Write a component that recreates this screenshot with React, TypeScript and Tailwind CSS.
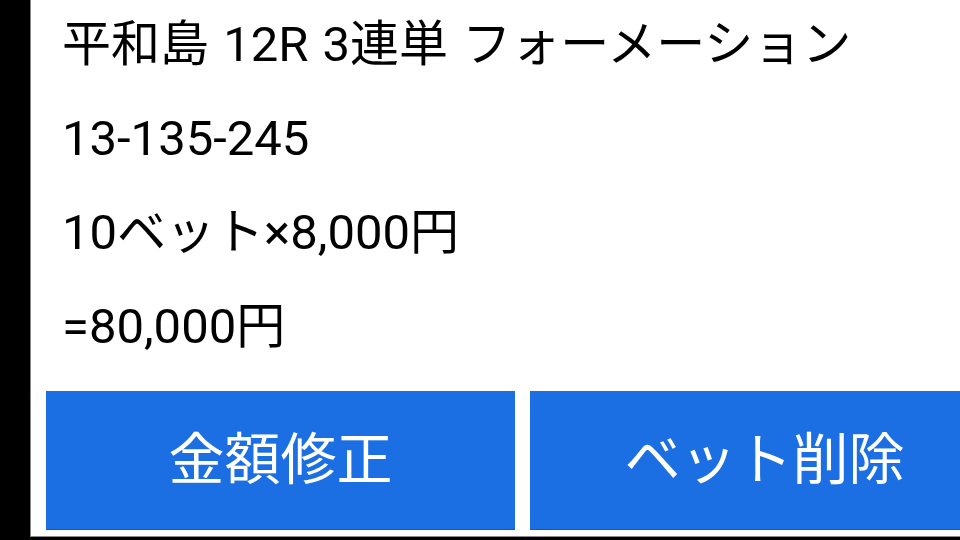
import React from "react";

export default function App() {
  const font = { fontFamily: 'Roboto, "Noto Sans CJK JP", sans-serif' };
  return (
    <div
      className="w-[960px] h-[540px] bg-black overflow-hidden flex"
      style={font}
    >
      <div className="ml-[30px] w-[985px] h-[537px] shrink-0 bg-white border-l border-b border-[#8a8a8a] flex flex-col">
        <div className="-mt-[2px] pl-[31px] text-[49px] text-black">
          <div className="h-[94px] leading-[94px] whitespace-nowrap [word-spacing:2px]">平和島 12R 3連単 フォーメーション</div>
          <div className="h-[94px] leading-[94px] whitespace-nowrap">13-135-245</div>
          <div className="h-[94px] leading-[94px] whitespace-nowrap">10ベット×8,000円</div>
          <div className="h-[94px] leading-[94px] whitespace-nowrap">=80,000円</div>
        </div>
        <div className="mt-[17px] px-[15px] flex gap-[15px]">
          <button className="w-[469px] h-[139px] shrink-0 bg-[#1b6fe2] border-b border-[#1659bd] text-white text-[56px] leading-none flex items-center justify-center">
            金額修正
          </button>
          <button className="w-[469px] h-[139px] shrink-0 bg-[#1b6fe2] border-b border-[#1659bd] text-white text-[56px] leading-none flex items-center justify-center">
            ベット削除
          </button>
        </div>
      </div>
    </div>
  );
}
